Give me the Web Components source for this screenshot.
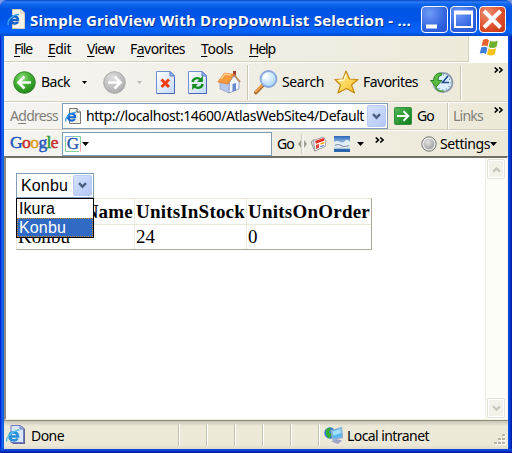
<!DOCTYPE html>
<html lang="en">
<head>
<meta charset="utf-8">
<title>Simple GridView With DropDownList Selection</title>
<style>
html,body{margin:0;padding:0;width:512px;height:453px;overflow:hidden;background:#7d9ae0}
</style>
</head>
<body>
<ie-window></ie-window>
<script>
const define = (name, css, html) => {
  const tpl = document.createElement('template');
  tpl.innerHTML = `<style>:host{display:block;box-sizing:border-box}*{box-sizing:border-box}${css}</style>${html}`;
  customElements.define(name, class extends HTMLElement {
    constructor() {
      super();
      this.attachShadow({ mode: 'open' }).appendChild(tpl.content.cloneNode(true));
    }
  });
};

// Single-line label; letter spacing is tuned so the text fills the width in "w".
customElements.define('ui-text', class extends HTMLElement {
  constructor() {
    super();
    this.attachShadow({ mode: 'open' }).innerHTML =
      '<style>:host{display:block;flex:none;white-space:nowrap}span{display:inline-block}</style><span><slot></slot></span>';
  }
  connectedCallback() {
    const w = +this.getAttribute('w');
    if (!w) return;
    this.style.width = w + 'px';
    const span = this.shadowRoot.querySelector('span');
    const n = this.textContent.length;
    const spacing = (w - span.getBoundingClientRect().width) / n;
    span.style.letterSpacing = spacing.toFixed(3) + 'px';
  }
});

const page = '<path d="M4.500 .5H12L15.500 4V15.500H4.500Z" fill="#f4f3ea" stroke="#777"/><path d="M12 .5V4H15.500" fill="#fff" stroke="#444"/>';
const eMark = '<path d="M3 9.200H10.200C10 4.500 3.200 4.800 3 9.200C3 13 8.500 13.500 9.800 11" fill="none" stroke="#1767cf" stroke-width="2.100"/><path d="M1 13.500C-1 11 5 4.500 11.500 4" fill="none" stroke="#2496e6" stroke-width="1.200"/>';
const sheet = '<path d="M.5 .5H14L18.500 5V22.500H.5Z" fill="url(#p)" stroke="#6f8fd0"/><path d="M14 .5V5H18.500Z" fill="#9db9ec" stroke="#5478c4"/><path d="M1 22.500H18.500V6" fill="none" stroke="#4a69b5"/>';
const sheetGrad = '<defs><linearGradient id="p" x2="1" y2="1"><stop stop-color="#fff"/><stop offset="1" stop-color="#c3d9fa"/></linearGradient></defs>';
const chev2 = '<path d="M.7 .5L3.500 3L.7 5.500M5.200 .5L8 3L5.200 5.500" fill="none" stroke="#000" stroke-width="1.600"/>';
const icons = {
  doc: [16, 16, page + eMark],
  titledoc: [18, 20, '<path d="M5.500 .5H14L17.500 4V19.500H5.500Z" fill="#f6f3e6" stroke="#d6d0b8"/><path d="M14 .5V4H17.500" fill="#fff" stroke="#c8c0a0"/><path d="M4 11H11C11 6 4 6 4 11C4 15.500 10 15 11 13" fill="none" stroke="#1b62c8" stroke-width="2.400"/><path d="M1.500 16C-1 12 6 5 12 5.500" fill="none" stroke="#39a4ee" stroke-width="1.400"/>'],
  flag: [20, 19, '<path d="M4 2Q7 0 10 2.200L8.600 8.500Q6 6.500 2.500 8.200Z" fill="#e8622d"/><path d="M11 2.700Q14 4.500 18.800 2.700L17.500 9Q13 11 9.700 9Z" fill="#6fb02c"/><path d="M2.200 9.500Q5.500 7.700 8.400 9.700L7 16Q4 14 .7 15.800Z" fill="#3d7fd8"/><path d="M9.500 10.300Q13 12 17.200 10.300L15.700 16.600Q12 18.500 8 16.500Z" fill="#f5c21a"/>'],
  back: [23, 23, '<defs><radialGradient id="g" cx=".4" cy=".3" r=".75"><stop stop-color="#8ee07a"/><stop offset=".5" stop-color="#42ad32"/><stop offset="1" stop-color="#1d8217"/></radialGradient></defs><circle cx="11.500" cy="11.500" r="10.800" fill="url(#g)" stroke="#3c8b35"/><path d="M18 11.500H6.500M11.500 5.500L5.500 11.500L11.500 17.500" fill="none" stroke="#fff" stroke-width="2.700"/>'],
  fwd: [23, 23, '<defs><radialGradient id="g" cx=".4" cy=".3" r=".75"><stop stop-color="#dedede"/><stop offset="1" stop-color="#a9a9a9"/></radialGradient></defs><circle cx="11.500" cy="11.500" r="10.800" fill="url(#g)" stroke="#aaa"/><path d="M5 11.500H16.500M11.500 5.500L17.500 11.500L11.500 17.500" fill="none" stroke="#fff" stroke-width="2.700"/>'],
  stop: [19, 23, sheetGrad + sheet + '<path d="M5.500 8.500L13 16M13 8.500L5.500 16" stroke="#f03a10" stroke-width="3"/>'],
  refresh: [19, 23, sheetGrad + sheet + '<path d="M4.500 11C5 7 10 6 12.500 8.500" fill="none" stroke="#139020" stroke-width="2.400"/><path d="M14.800 5V11H9Z" fill="#139020"/><path d="M14.500 13C14 17 9 18 6.500 15.500" fill="none" stroke="#139020" stroke-width="2.400"/><path d="M4.200 19V13H10Z" fill="#139020"/>'],
  home: [24, 24, '<path d="M16 1H19V7H16Z" fill="#a23a2c"/><path d="M3 12L13 13L12 23L3 19Z" fill="#b8c8ec" stroke="#8a9cc8" stroke-width=".7"/><path d="M12.500 12L17 6L22 12V19L12 23Z" fill="#f2f6ff" stroke="#8396c8" stroke-width=".8"/><path d="M15.500 14L19 13V20.200L15.500 21.800Z" fill="#6688cc"/><path d="M.8 12L7.500 3L17 4.500L11 14Z" fill="#f79a3b" stroke="#d97925" stroke-width=".7"/><path d="M4 9L8 4L14 5" fill="none" stroke="#ffd08a" stroke-width="1.500"/><path d="M17 4.500L23.200 12" stroke="#c98a5d" stroke-width="1.500"/>'],
  search: [24, 25, '<defs><radialGradient id="g" cx=".4" cy=".35" r=".7"><stop stop-color="#fff"/><stop offset="1" stop-color="#9ed2f8"/></radialGradient></defs><path d="M9.500 14.500L2 22.500" stroke="#a86d35" stroke-width="3.800" stroke-linecap="round"/><path d="M9 14.200L2 21.500" stroke="#f2a04a" stroke-width="2" stroke-linecap="round"/><circle cx="14.500" cy="9" r="8" fill="url(#g)" stroke="#8ba9de" stroke-width="1.800"/><path d="M9.500 9Q10 5 14 4" fill="none" stroke="#fff" stroke-width="2"/>'],
  star: [25, 24, '<defs><linearGradient id="g" x2="1" y2="1"><stop stop-color="#fff6a0"/><stop offset="1" stop-color="#f6bb1e"/></linearGradient></defs><path d="M12 1L15.500 9L24 9.500L17.500 15L20.500 23L12.500 18.500L4 23L6.500 15L1 9.500L9 9Z" fill="url(#g)" stroke="#c58a18" stroke-width="1.200" stroke-linejoin="round"/><path d="M12 4L10 10L4.500 10.500" fill="none" stroke="#fffbd8" stroke-width="1.300"/>'],
  history: [24, 23, '<circle cx="13" cy="11.500" r="9.500" fill="#dcefff" stroke="#8f9fae" stroke-width="2"/><circle cx="13" cy="11.500" r="7.300" fill="none" stroke="#5d91c8" stroke-width="1.200" stroke-dasharray="1 2.800"/><path d="M18 5L12.500 11.500H19" fill="none" stroke="#234f8c" stroke-width="1.600"/><path d="M11 2C5.500 2 3.500 6 3.800 9.500H.5L6 16L12 9.500H8.200C8 6 9 4.500 12 4Z" fill="#59bd42" stroke="#247c20" stroke-width=".9"/><path d="M5 14C6 19 10 21 14 20" fill="none" stroke="#4d9f3f" stroke-width="1.500"/>'],
  go: [18, 18, '<defs><linearGradient id="g" x2="1" y2="1"><stop stop-color="#55b955"/><stop offset="1" stop-color="#0b7b19"/></linearGradient></defs><rect x=".5" y=".5" width="17" height="17" rx="1" fill="url(#g)" stroke="#378e3c"/><path d="M3 9H14M9.500 4.200L14.300 9L9.500 13.800" fill="none" stroke="#fff" stroke-width="2"/>'],
  chev2: [9, 6, chev2],
  tri: [5, 3, '<path d="M0 0H5L2.500 3Z"/>'],
  trioff: [5, 3, '<path d="M0 0H5L2.500 3Z" fill="#b8b8b0"/>'],
  bigtri: [7, 4, '<path d="M0 0H7L3.500 4Z"/>'],
  down: [9, 7, '<path d="M1 1.200L4.500 4.700L8 1.200" fill="none" stroke="#4d6185" stroke-width="2.400"/>'],
  downoff: [9, 7, '<path d="M1 1.200L4.500 4.700L8 1.200" fill="none" stroke="#c8c7ba" stroke-width="2.300"/>'],
  upoff: [9, 7, '<path d="M1 5.800L4.500 2.300L8 5.800" fill="none" stroke="#c8c7ba" stroke-width="2.300"/>'],
  grip: [9, 24, '<path d="M4 1V23" stroke="#c0bdac"/><path d="M5 1V23" stroke="#fff"/><path d="M3 8V16L0 12ZM6 8V16L9 12Z" fill="#a09e92"/>'],
  news: [17, 16, '<path d="M1 6L4 3.500L8 13.500L4.500 15Z" fill="#d8d8dc" stroke="#888" stroke-width=".8"/><path d="M3.500 4.500L13.500 1L16 5L15 10.500L5 15Z" fill="#fff" stroke="#8a8a90" stroke-width=".8"/><path d="M5 5L13.500 2L14.700 4.500L6 7.800Z" fill="#e52c25"/><path d="M6 9L9.300 7.800L8.800 11.800L6 13Z" fill="#e34038"/><path d="M10.500 8L14.300 6.500" stroke="#f0a818" stroke-width="1.500"/><path d="M10.200 10.800L13.800 9.200" stroke="#5a78c8" stroke-width="1.200"/>'],
  sky: [16, 16, '<defs><linearGradient id="g" x2="0" y2="1"><stop stop-color="#2665b5"/><stop offset=".45" stop-color="#a8c8e8"/><stop offset=".6" stop-color="#fff"/><stop offset="1" stop-color="#5585b8"/></linearGradient></defs><path d="M0 0H16V16H0Z" fill="url(#g)"/><path d="M0 6Q3 4 6 6T11 5T16 6V11Q12 13 9 11T0 11Z" fill="#e4edf5"/><path d="M1 9.500Q4 7.500 7 9.500T15 9.500" fill="none" stroke="#8295a8" stroke-width="1.200"/><path d="M0 14.500H16" stroke="#2966a8" stroke-width="3"/>'],
  knob: [16, 16, '<defs><radialGradient id="g" cx=".4" cy=".35" r=".7"><stop stop-color="#e4e4e4"/><stop offset="1" stop-color="#999"/></radialGradient></defs><circle cx="8" cy="8" r="7.200" fill="#ddd" stroke="#777"/><circle cx="8" cy="8" r="5.700" fill="url(#g)" stroke="#fff" stroke-width=".6"/>'],
  status: [20, 20, '<path d="M6.500 1.500H16.500L19 4V19H6.500Z" fill="#62619a"/><path d="M5 .5H14.500L17.500 3.500V17.500H5Z" fill="#dbe8fb" stroke="#6b7cc0"/><path d="M14 .5V4H17.500" fill="#aebfe8" stroke="#6b7cc0"/><path d="M3.500 11.500H12C11.500 6 3.700 6 3.500 11.500C3.500 16 10 16.500 11.500 13.500" fill="none" stroke="#2a8fd6" stroke-width="2.600"/><path d="M1 16.500C-1 13.500 6 5.500 13.500 5" fill="none" stroke="#5cc0ef" stroke-width="1.400"/>'],
  net: [20, 19, '<circle cx="6" cy="7" r="5.700" fill="#2d79cf"/><path d="M2 4Q4 1 7 2L5 6L8 9L5 12.500Q1 9 2 4Z" fill="#36b032"/><path d="M7 4.500L17.500 1.500L18.500 11.500L9 13.500Z" fill="#58b8f6" stroke="#9ab0cc" stroke-width="1.300"/><path d="M8.500 5.500L16.500 3L17 7L9.500 9.500Z" fill="#a5e0ff"/><path d="M7 15.500L12 13L18 14.500L14 18Z" fill="#9ba3c8"/>'],
  g: [16, 16, '<path d="M0 0H16V16H0Z" fill="#fff"/><path d="M.5 15.500V.5H8" fill="none" stroke="#8cb3e0"/><path d="M8 .5H15.500V8" fill="none" stroke="#8cd09a"/><path d="M15.500 8V15.500" stroke="#e6a8a8"/><path d="M.5 6V15.500H14" fill="none" stroke="#8cd09a"/>'],
  size: [12, 12, '<path d="M9 0h3v3h-3zM5 4h3v3h-3zM9 4h3v3h-3zM1 8h3v3h-3zM5 8h3v3h-3zM9 8h3v3h-3z" fill="#fff"/><path d="M8 0h3v2h-3zM4 4h3v2h-3zM8 4h3v2h-3zM0 8h3v2h-3zM4 8h3v2h-3zM8 8h3v2h-3z" fill="#b8b4a2"/>']
};
customElements.define('ui-icon', class extends HTMLElement {
  constructor() { super(); this.attachShadow({ mode: 'open' }); }
  connectedCallback() {
    const [w, h, body] = icons[this.getAttribute('name')];
    this.shadowRoot.innerHTML = `<style>:host{display:block;flex:none;width:${w}px;height:${h}px}svg{display:block}</style><svg width="${w}" height="${h}" viewBox="0 0 ${w} ${h}">${body}</svg>`;
  }
});

define('ui-sep', ':host{flex:none;width:2px;height:100%;border-left:1px solid #cbc7b4;border-right:1px solid #fff}', '');

define('drop-button', `
:host{flex:none;width:19px;height:21px;border:1px solid #b9cbf5;border-radius:2px;background:linear-gradient(135deg,#d5e1fd,#b4c8f6);display:grid;place-items:center}`,
'<ui-icon name="down"></ui-icon>');

define('caption-button', `
:host{flex:none;width:27px;height:27px;border:1px solid #fff;border-radius:4px;background:radial-gradient(circle at 30% 25%,#6f9af5,#2f62e0 65%,#2452cf)}
:host([close]){background:radial-gradient(circle at 30% 25%,#ee8d72,#dc4c28 60%,#c03612)}
::slotted(svg){display:block;width:25px;height:25px}`, '<slot></slot>');

define('title-bar', `
:host{height:36px;padding:5px 5px 0 7px;display:flex;border-radius:7px 7px 0 0;color:#fff;
background:linear-gradient(#0846c5 0,#2b7bfb 2px,#1068ef 4px,#0054e3 9px,#0055e8 20px,#0661fb 29px,#0462fb 32px,#0149c8 36px)}
ui-icon{margin:4px 5px 0 0}
ui-text{font:700 15px/31px "Open Sans",sans-serif;text-shadow:1px 1px #0b3290;margin-right:10px}
caption-button{margin:1px 2px 0 0}`,
`<ui-icon name="titledoc"></ui-icon><ui-text w="381">Simple GridView With DropDownList Selection - ...</ui-text>
<caption-button><svg><path d="M4 19.500H15" stroke="#fff" stroke-width="4"/></svg></caption-button>
<caption-button><svg><path d="M4 5H21V20H4Z" fill="none" stroke="#fff" stroke-width="2"/><path d="M3 5.500H22" stroke="#fff" stroke-width="4"/></svg></caption-button>
<caption-button close><svg><path d="M4 4L20.500 20.500M20.500 4L4 20.500" stroke="#fff" stroke-width="3.900"/></svg></caption-button>`);

define('menu-bar', `
:host{height:27px;display:flex;border-bottom:1px solid #fff;line-height:25px}
nav{display:flex;flex:1;gap:16px;padding-left:10px;border-bottom:1px solid #d4d0be}
u{text-underline-offset:2px;text-decoration-thickness:1px;text-decoration-skip-ink:none}
aside{width:40px;background:#fff;border-left:1px solid #d4d0be;display:grid;place-items:center}`,
`<nav><ui-text w="18"><u>F</u>ile</ui-text><ui-text w="23"><u>E</u>dit</ui-text><ui-text w="27"><u>V</u>iew</ui-text><ui-text w="55">F<u>a</u>vorites</ui-text><ui-text w="32"><u>T</u>ools</ui-text><ui-text w="26"><u>H</u>elp</ui-text></nav><aside><ui-icon name="flag" style="margin-top:-3px"></ui-icon></aside>`);

define('tool-bar', `
:host{height:39px;display:flex;align-items:center;border-bottom:1px solid #d4d0be;padding-left:9px;line-height:30px}
ui-sep{height:35px}`,
`<ui-icon name="back"></ui-icon><ui-text w="29" style="margin-left:5px">Back</ui-text><ui-icon name="tri" style="margin-left:12px"></ui-icon>
<ui-icon name="fwd" style="margin-left:16px"></ui-icon><ui-icon name="trioff" style="margin-left:11px"></ui-icon>
<ui-icon name="stop" style="margin-left:14px"></ui-icon><ui-icon name="refresh" style="margin-left:13px"></ui-icon><ui-icon name="home" style="margin-left:10px"></ui-icon>
<ui-sep style="margin-left:6px"></ui-sep><ui-icon name="search" style="margin-left:5px"></ui-icon><ui-text w="42" style="margin-left:4px">Search</ui-text>
<ui-icon name="star" style="margin-left:10px"></ui-icon><ui-text w="55" style="margin-left:4px">Favorites</ui-text><ui-icon name="history" style="margin-left:12px"></ui-icon>
<ui-sep style="margin-left:6px"></ui-sep><ui-icon name="chev2" style="margin:0 0 24px 32px"></ui-icon>`);

define('address-bar', `
:host{height:28px;display:flex;align-items:center;border-top:1px solid #fff;border-bottom:1px solid #d4d0be;padding-left:6px;line-height:24px}
.box{display:flex;align-items:center;width:326px;height:26px;margin-left:4px;background:#fff;border:1px solid #7f9db9;padding:0 1px 0 2px}
.dim{color:#807f78}u{text-underline-offset:2px;text-decoration-skip-ink:none;text-decoration-thickness:1px}`,
`<ui-text class="dim" w="48">A<u>d</u>dress</ui-text><div class="box"><ui-icon name="doc"></ui-icon><ui-text w="278" style="margin-left:5px">http://localhost:14600/AtlasWebSite4/Default</ui-text><drop-button style="margin-left:3px;height:22px"></drop-button></div>
<ui-icon name="go" style="margin-left:6px"></ui-icon><ui-text w="17" style="margin-left:5px">Go</ui-text><ui-sep style="margin-left:13px"></ui-sep><ui-text class="dim" w="30" style="margin-left:4px">Links</ui-text><ui-icon name="chev2" style="margin:0 0 12px 11px"></ui-icon>`);

define('google-logo', `:host{font:17.5px/20px "Liberation Serif",serif;-webkit-text-stroke:.5px currentColor}
b{font-weight:400;color:#2157ba}.r{color:#c9302a}.y{color:#dca31c}.g{color:#249a3c}`,
`<ui-text w="48"><b>G</b><b class="r">o</b><b class="y">o</b><b>g</b><b class="g">l</b><b class="r">e</b></ui-text>`);

define('google-bar', `
:host{height:26px;display:flex;align-items:center;border-top:1px solid #fff;padding-left:6px;line-height:24px}
.box{display:flex;align-items:center;width:210px;height:24px;margin-left:4px;background:#fff;border:1px solid #7f9db9;padding-left:2px}
.g{display:grid;place-items:center}.g>*{grid-area:1/1}.g ui-text{font:17px/16px "Liberation Serif",serif;color:#2857ad;-webkit-text-stroke:.4px}
google-logo{margin-top:-3px}`,
`<google-logo></google-logo><div class="box"><div class="g"><ui-icon name="g"></ui-icon><ui-text>G</ui-text></div><ui-icon name="bigtri" style="margin-left:1px"></ui-icon></div>
<ui-text w="17" style="margin-left:5px">Go</ui-text><ui-icon name="grip" style="margin-left:4px"></ui-icon><ui-icon name="news" style="margin-left:3px"></ui-icon><ui-icon name="sky" style="margin-left:7px"></ui-icon><ui-icon name="bigtri" style="margin-left:7px"></ui-icon><ui-icon name="chev2" style="margin:0 0 8px 11px"></ui-icon>
<ui-icon name="knob" style="margin-left:37px"></ui-icon><ui-text w="50" style="margin-left:3px">Settings</ui-text><ui-icon name="bigtri"></ui-icon>`);

define('drop-list', `
:host{position:relative;width:78px;height:25px;font:16px/19px "Liberation Sans",Arial,sans-serif}
.field{display:flex;align-items:center;height:25px;border:1px solid #7f9db9;background:#fff;padding:0 1px 0 4px;justify-content:space-between}
.list{position:absolute;z-index:2;left:0;top:25px;width:78px;height:40px;border:1px solid #000;background:#fff}
.list div{height:19px;padding-left:2px;display:flex}
.list .on{background:#316ac5;color:#fff;outline:1px dotted #c88a35;outline-offset:-1px}`,
`<div class="field"><ui-text w="47">Konbu</ui-text><drop-button></drop-button></div>
<div class="list"><div><ui-text w="36">Ikura</ui-text></div><div class="on"><ui-text w="47">Konbu</ui-text></div></div>`);

define('data-grid', `
:host{width:356px;height:52px;display:grid;grid-template-columns:118px 112px 1fr;grid-template-rows:26px 1fr;border:1px solid #ece9d8;border-right-color:#aca899;border-bottom-color:#aca899;font:19px/26px "Liberation Serif",serif}
div{padding-left:1px;border-right:1px solid #ece9d8;overflow:hidden}.h{font-weight:700;border-bottom:1px solid #ece9d8}.c{line-height:24px}div:nth-of-type(3n){border-right:0}`,
`<div class="h"><ui-text w="115">ProductName</ui-text></div><div class="h"><ui-text w="109">UnitsInStock</ui-text></div><div class="h"><ui-text w="122">UnitsOnOrder</ui-text></div>
<div class="c"><ui-text w="52">Konbu</ui-text></div><div class="c"><ui-text w="19">24</ui-text></div><div class="c"><ui-text>0</ui-text></div>`);

define('scroll-bar', `
:host{width:22px;display:flex;flex-direction:column;justify-content:space-between;background:#fdfdf8;border-left:1px solid #eeede5;padding:1px 2px 1px 1px}
div{height:20px;border:1px solid #e4e2d6;border-radius:2px;background:#f2f1ea;display:grid;place-items:center;box-shadow:inset 0 0 0 1px #fff}`,
'<div><ui-icon name="upoff"></ui-icon></div><div><ui-icon name="downoff"></ui-icon></div>');

define('page-view', `
:host{height:264px;display:flex;background:#fff;border-top:2px solid #716f64;border-left:2px solid #8e8b7f;border-right:1px solid #f1efe2;border-bottom:1px solid #f1efe2;color:#000}
main{flex:1;padding:15px 0 0 10px}`,
'<main><drop-list></drop-list><data-grid></data-grid></main><scroll-bar></scroll-bar>');

define('status-bar', `
:host{height:29px;display:flex;align-items:center;padding-left:2px;border-top:1px solid #8f8c7e;background:linear-gradient(#c9c5b4,#ece9d8 5px,#ece9d8 24px,#dedac8);line-height:26px}
ui-text{padding-top:2px}
ui-sep{height:22px;margin-right:26px;border-left-color:#c5c2b0}`,
`<ui-icon name="status"></ui-icon><ui-text w="33" style="margin:0 114px 0 5px">Done</ui-text>
<ui-sep></ui-sep><ui-sep></ui-sep><ui-sep></ui-sep><ui-sep></ui-sep><ui-sep></ui-sep><ui-sep style="margin-right:4px"></ui-sep>
<ui-icon name="net"></ui-icon><ui-text w="82" style="margin-left:3px">Local intranet</ui-text><ui-icon name="size" style="margin:10px 0 0 65px"></ui-icon>`);

define('ie-window', `
:host{width:512px;height:453px;border-radius:7px 7px 0 0;overflow:hidden;color:#000;font:14px/20px "Noto Sans",sans-serif;
background:linear-gradient(90deg,#0019cf 0,#0831d9 1px,#166aee 2px,#0855dd 4px,#0855dd 508px,#0646dd 509px,#0028c0 511px,#001590 512px)}
.body{margin:0 4px;background:linear-gradient(90deg,#f5f4f1,#ece9d8)}
.foot{height:4px;background:linear-gradient(#0b4fe0,#0638d0 50%,#001590)}`,
`<title-bar></title-bar><div class="body"><menu-bar></menu-bar><tool-bar></tool-bar><address-bar></address-bar><google-bar></google-bar><page-view></page-view><status-bar></status-bar></div><div class="foot"></div>`);
</script>
</body>
</html>
